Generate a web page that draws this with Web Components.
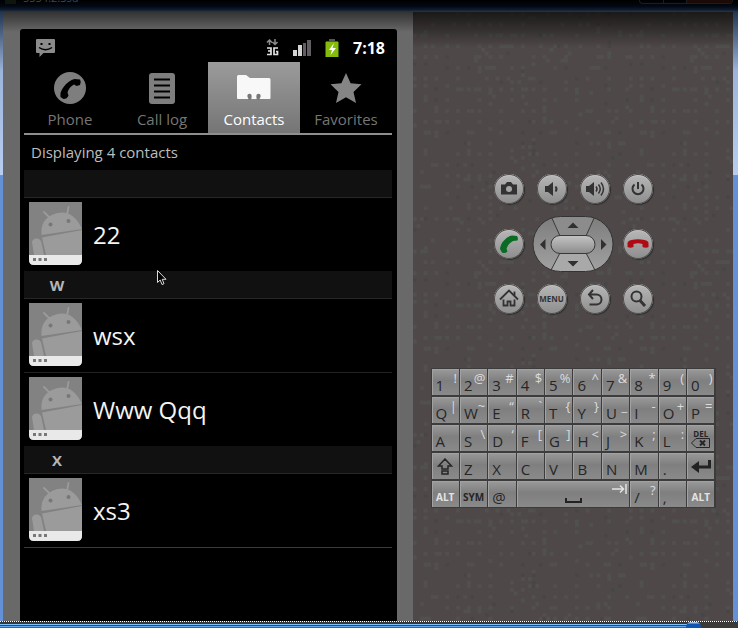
<!DOCTYPE html>
<html lang="en">
<head>
<meta charset="utf-8">
<title>Emulator 5554</title>
<style>
  html, body { height: 100%; }
  body {
    margin: 0;
    background: #000;
    font-family: "Open Sans", "Noto Sans", sans-serif;
  }
</style>
</head>
<body>
<emulator-window caption="5554:2.3sd">
  <phone-screen slot="screen" time="7:18">
    <phone-tab slot="tabs" icon="phone">Phone</phone-tab>
    <phone-tab slot="tabs" icon="log">Call log</phone-tab>
    <phone-tab slot="tabs" icon="folder" active>Contacts</phone-tab>
    <phone-tab slot="tabs" icon="star">Favorites</phone-tab>
    <list-heading>Displaying 4 contacts</list-heading>
    <list-section></list-section>
    <contact-row>22</contact-row>
    <list-section>W</list-section>
    <contact-row>wsx</contact-row>
    <contact-row divided>Www Qqq</contact-row>
    <list-section>X</list-section>
    <contact-row>xs3</contact-row>
    <list-end></list-end>
  </phone-screen>
  <hardware-keys slot="controls"></hardware-keys>
  <qwerty-board slot="controls"></qwerty-board>
</emulator-window>

<script>
const ICONS = {
  phone: `<svg width="34" height="34" viewBox="0 0 34 34"><circle cx="17" cy="17" r="16" fill="#7e7e7e"/>
    <path d="M21.500 8 27 8.500Q28.500 11 27 14L23.500 15 21 13.500Q16 16 14.500 21.500L15.500 24.500Q14 28 10.500 28L7.500 26Q6.500 21 11 15.500Q15.500 9.500 21.500 8Z" fill="#000"/></svg>`,
  log: `<svg width="34" height="34" viewBox="0 0 34 34"><rect x="4" y="2" width="26" height="31" rx="3" fill="#7e7e7e"/>
    <path d="M9 8.500h16M9 14.500h16M9 20.500h16M9 26.500h16" stroke="#000" stroke-width="2"/></svg>`,
  folder: `<svg width="34" height="34" viewBox="0 0 34 34"><path d="M0 5.500Q0 4 1.500 4H9l4 3h19q1.500 0 1.500 1.500V27q0 1-1 1H22.500v-2.500h-3V28h-5v-2.500h-3V28H1q-1 0-1-1Z" fill="#f8f8f8"/>
    <g fill="#777"><circle cx="12.500" cy="25" r="2.200"/><circle cx="21.500" cy="25" r="2.200"/><path d="M11.500 25h2v4h-2zM20.500 25h2v4h-2z"/></g></svg>`,
  star: `<svg width="34" height="34" viewBox="0 0 34 34"><path d="M17 2 21.600 12.300 32.500 13.300 24.500 20.900 27 32 17 26.300 7 32 9.500 20.900 1.500 13.300 12.400 12.300Z" fill="#858585"/></svg>`,
  camera: `<path d="M7 10.500h4l2-2.500h4l2 2.500h4V20.500H7Z"/><circle cx="15" cy="15" r="3" fill="#a5a5a5"/>`,
  quiet: `<path d="M8 12h3l5-4v14l-5-4H8Z"/><path d="M18.500 12.500q2 2.500 0 5" fill="none" stroke="#333" stroke-width="2"/>`,
  loud: `<path d="M6 12h3l5-4v14l-5-4H6Z"/><path d="M16 12.500q2 2.500 0 5M18.500 10.500q3.500 4.500 0 9M21 8.500q5 6.500 0 13" fill="none" stroke="#333" stroke-width="1.500"/>`,
  power: `<path d="M11.500 10.500a5.500 5.500 0 1 0 7 0M15 8v7" fill="none" stroke="#333" stroke-width="2"/>`,
  call: `<path d="M18 6.500 23 7Q24.500 9 23.500 11.500L19 12Q14 14.500 12.500 19.500L13.500 22.500Q11 25 8 23.500L6 20Q6.500 15 10 11.500Q13.500 7 18 6.500Z" fill="#0a6b25"/>`,
  hangup: `<path d="M4.500 14Q5 11.500 8.500 11Q15 9.500 21.500 11Q25 11.500 25.500 14V18Q23 19.500 19.500 18V15Q15 13.500 10.500 15V18Q7 19.500 4.500 18Z" fill="#b00b12"/>`,
  home: `<path d="M6 15.500 15 6.500 24 15.500M20.500 11.500V7.500M9.500 15.500V21.500H13.500V17.500H16.500V21.500H20.500V15.500" fill="none" stroke="#333" stroke-width="1.800"/>`,
  back: `<path d="M13 6 9 10.500 13 15M9.500 10.500H16.500A5 5 0 0 1 16.500 20.500H9.500" fill="none" stroke="#333" stroke-width="2"/>`,
  search: `<circle cx="13.500" cy="12.500" r="5" fill="none" stroke="#333" stroke-width="2"/><path d="M17 16.500 22 22" stroke="#333" stroke-width="3"/>`,
};

class EmulatorWindow extends HTMLElement {
  connectedCallback() {
    this.attachShadow({ mode: "open" });
    this.shadowRoot.innerHTML = `
      <style>
        :host {
          display: flex;
          flex-direction: column;
          min-height: 100vh;
          box-sizing: border-box;
          position: relative;
          overflow: hidden;
        }
        header {
          display: flex;
          align-items: flex-start;
          gap: 7px;
          height: 12px;
          padding: 0 5px;
          box-sizing: border-box;
          overflow: hidden;
          background: linear-gradient(#000, #020812 50%, #0c1b2d 80%, #2b3647);
        }
        .app { width: 11px; height: 4px; background: #0d150c; }
        header span {
          margin-top: -10px;
          font: 11px/16px "Open Sans", sans-serif;
          color: #444448;
        }
        .caption-buttons {
          display: flex;
          width: 92px;
          height: 3px;
          margin-left: auto;
          border: 1px solid #1c1d22;
          border-top: 0;
          border-radius: 0 0 5px 5px;
          overflow: hidden;
        }
        .caption-buttons i { flex: 1; border-right: 1px solid #1c1d22; }
        .caption-buttons i:last-child { flex: 2; border: 0; background: #1c0a06; }
        .frame {
          flex: 1;
          display: grid;
          grid-template-columns: 410fr 320fr;
          border-left: 3px solid;
          border-right: 5px solid;
          border-image: linear-gradient(#20334e, #9cb4dc 60px, #b8cdf0 163px, #6490d6 164px, #6490d6) 1;
        }
        .bezel {
          min-width: 0;
          box-sizing: border-box;
          padding: 17px 16px 0 17px;
          display: flex;
          background: linear-gradient(#333, #696969 20px, #696969);
        }
        .panel {
          min-width: 0;
          position: relative;
          display: flex;
          flex-direction: column;
          align-items: center;
          gap: 54px;
          padding-top: 162px;
          background: #4f4848;
        }
        .grain {
          position: absolute;
          inset: 0;
          width: 100%;
          height: 100%;
        }
        .shade {
          position: absolute;
          inset: 0 0 auto;
          height: 36px;
          background: linear-gradient(#000a, #0000);
        }
        ::slotted([slot="screen"]) { flex: 1; }
        ::slotted([slot="controls"]) { position: relative; }
        .seek {
          position: absolute;
          inset: auto 0 0;
          height: 7px;
          background: #3b3838;
        }
        .seek i {
          display: block;
          height: 1px;
          background: repeating-linear-gradient(90deg, #fff 0 1px, #333 1px 2px);
        }
        .seek b {
          display: block;
          width: 94%;
          height: 5px;
          margin-top: 1px;
          background: linear-gradient(#1d3c66 0 1px, #7cc4ff 1px 2px, #0b4fae 2px 3px, #6aa5ee 3px 4px, #1f66d0 4px);
        }
        .seek u {
          position: absolute;
          left: 93%;
          bottom: 0;
          width: 15px;
          height: 6px;
          border-radius: 5px 5px 0 0;
          background: linear-gradient(#a9c6e6 0 1px, #4f8fd8 1px 2px, #0f55b4 2px);
        }
        .pointer {
          position: absolute;
          left: 157px;
          top: 270px;
        }
      </style>
      <header><i class="app"></i><span></span><div class="caption-buttons"><i></i><i></i><i></i></div></header>
      <div class="frame">
        <div class="bezel"><slot name="screen"></slot></div>
        <div class="panel">
          <svg class="grain" aria-hidden="true">
            <defs><pattern id="grain" width="216" height="216" patternUnits="userSpaceOnUse"></pattern></defs>
            <rect width="100%" height="100%" fill="url(#grain)"/>
          </svg>
          <div class="shade"></div>
          <slot name="controls"></slot>
        </div>
      </div>
      <div class="seek"><i></i><b></b><u></u></div>
      <svg class="pointer" width="10" height="16" viewBox="0 0 10 16" aria-hidden="true">
        <path d="M0.500 0.500V12.500L3.200 10 5 14.500 7 13.700 5.200 9.300H9Z" fill="#000" stroke="#ddd"/>
      </svg>
    `;
    this.shadowRoot.querySelector("header span").textContent = this.getAttribute("caption");
    this.shadowRoot.querySelector("pattern").innerHTML = this.grain();
  }

  // fixed seed, so the speckles are the same on every load
  grain() {
    let seed = 7;
    const next = () => (seed = (seed * 16807) % 2147483647) / 2147483647;
    let out = "";
    for (let y = 0; y < 60; y++) {
      for (let x = 0; x < 60; x++) {
        const onGrid = (x % 3 === 0) + (y % 3 === 0);
        if (next() < [0.02, 0.08, 0.5][onGrid]) {
          const fill = next() < 0.85 ? "#50514e" : "#474545";
          out += `<rect x="${x * 3.6}" y="${y * 3.6}" width="3.6" height="3.6" fill="${fill}"/>`;
        }
      }
    }
    return out;
  }
}

class PhoneScreen extends HTMLElement {
  connectedCallback() {
    this.attachShadow({ mode: "open" });
    this.shadowRoot.innerHTML = `
      <style>
        :host {
          display: block;
          box-sizing: border-box;
          min-width: 0;
          padding: 0 5px 0 4px;
          border-radius: 3px 3px 0 0;
          background: #000;
        }
        .status {
          display: flex;
          align-items: center;
          height: 33px;
          padding: 4px 7px 0 12px;
          box-sizing: border-box;
        }
        .status .right {
          margin-left: auto;
          display: flex;
          align-items: center;
          gap: 14px;
        }
        time {
          color: #fff;
          font-size: 16px;
          font-weight: 700;
          line-height: 20px;
        }
        svg { display: block; }
        nav {
          display: grid;
          grid-template-columns: repeat(4, 1fr);
          border-bottom: 2px solid #8e8e8e;
        }
      </style>
      <div class="status">
        <svg width="19" height="18" viewBox="0 0 19 18">
          <path d="M1 0h17q1 0 1 1v12q0 1-1 1H7.500L3.500 18V14H1q-1 0-1-1V1Q0 0 1 0Z" fill="#8b8b8b"/>
          <path d="M4.500 4h2v2h-2zM12.500 4h2v2h-2z" fill="#000"/>
          <path d="M3 8.500Q9.500 13 16 8.500" fill="none" stroke="#000" stroke-width="1.500"/>
        </svg>
        <div class="right">
          <svg width="13" height="17" viewBox="0 0 13 17" fill="none">
            <path d="M3.500 6V2M1 3.500 3.500 1 6 3.500M9 0V5M6.500 3 9 5.500 11.500 3" stroke="#8b8b8b" stroke-width="1.500"/>
            <path d="M1 9H5V15.500H1M2 12H5M12 9H8V15.500H11.500V12.500H10" stroke="#e2e2e2" stroke-width="1.700"/>
          </svg>
          <svg width="18" height="16" viewBox="0 0 18 16">
            <path d="M0 10h4v6H0zM5 5h4v11H5z" fill="#d4d4d4"/>
            <path d="M10 3h3v13h-3zM14 0h4v16h-4z" fill="#625d62"/>
          </svg>
          <svg width="14" height="18" viewBox="0 0 14 18">
            <path d="M4 0h6v2h3v3H1V2h3Z" fill="#555"/>
            <path d="M0.500 3h13v15h-13z" fill="#85bc0b"/>
            <path d="M9 4 4 11h3l-1.500 5L11 9H7.500Z" fill="#fff"/>
          </svg>
          <time></time>
        </div>
      </div>
      <nav><slot name="tabs"></slot></nav>
      <slot></slot>
    `;
    this.shadowRoot.querySelector("time").textContent = this.getAttribute("time");
  }
}

class PhoneTab extends HTMLElement {
  connectedCallback() {
    this.attachShadow({ mode: "open" });
    this.shadowRoot.innerHTML = `
      <style>
        :host { display: block; min-width: 0; }
        button {
          display: flex;
          flex-direction: column;
          align-items: center;
          gap: 4px;
          width: 100%;
          height: 71px;
          padding: 9px 0 0;
          border: 0;
          background: none;
          color: #757575;
          font: 15px/20px "Open Sans", "Noto Sans", sans-serif;
          white-space: nowrap;
        }
        :host([active]) button {
          background: linear-gradient(#9b9b9b, #757575);
          color: #fff;
        }
        svg { display: block; flex: none; }
      </style>
      <button type="button">${ICONS[this.getAttribute("icon")]}<slot></slot></button>
    `;
  }
}

class ListHeading extends HTMLElement {
  connectedCallback() {
    this.attachShadow({ mode: "open" });
    this.shadowRoot.innerHTML = `
      <style>
        :host {
          display: block;
          height: 35px;
          padding-left: 7px;
          font-size: 15px;
          line-height: 35px;
          color: #bdbdbd;
        }
      </style>
      <slot></slot>
    `;
  }
}

class ListSection extends HTMLElement {
  connectedCallback() {
    this.attachShadow({ mode: "open" });
    this.shadowRoot.innerHTML = `
      <style>
        :host {
          display: block;
          box-sizing: border-box;
          height: 28px;
          border-bottom: 1px solid #272727;
          background: #111;
          color: #b5b5b5;
          font-size: 15px;
          font-weight: 700;
          line-height: 28px;
        }
        /* letters are centred in their own narrow column */
        div { width: 66px; text-align: center; }
      </style>
      <div><slot></slot></div>
    `;
  }
}

class ContactRow extends HTMLElement {
  connectedCallback() {
    this.attachShadow({ mode: "open" });
    this.shadowRoot.innerHTML = `
      <style>
        :host {
          display: flex;
          align-items: center;
          gap: 11px;
          height: 73px;
          padding-left: 5px;
          color: #f4f4f4;
          font-size: 24px;
          line-height: 32px;
        }
        :host([divided]) { border-top: 1px solid #222; }
        svg { display: block; margin-bottom: 2px; }
      </style>
      <svg width="53" height="63" viewBox="0 0 53 63">
        <path d="M0 0H53V58Q53 63 48 63H5Q0 63 0 58Z" fill="#828282"/>
        <g fill="#9b9b9b">
          <path d="M12.500 33Q11 18 24 12.500Q42 5 52 25L53 27Z"/>
          <path d="M13 35.500 53 28V53H17Z"/>
          <path d="M3 40Q4 36 8 36.500Q12 37 12.500 41L15 53H5Z"/>
        </g>
        <path d="M15 10 20 15M39.500 5 38 13" stroke="#9b9b9b" stroke-width="1.800" stroke-linecap="round"/>
        <g fill="#777"><circle cx="21.500" cy="22.500" r="2"/><circle cx="39.500" cy="19" r="2"/></g>
        <path d="M0 53H53V58Q53 63 48 63H5Q0 63 0 58Z" fill="#e9e9e9"/>
        <path d="M4 56h3v3H4zM9.500 56h3v3h-3zM15 56h3v3h-3z" fill="#777"/>
      </svg>
      <slot></slot>
    `;
  }
}

class ListEnd extends HTMLElement {
  connectedCallback() {
    this.attachShadow({ mode: "open" });
    this.shadowRoot.innerHTML = `
      <style>:host { display: block; border-top: 1px solid #3a3a3a; }</style>
    `;
  }
}

class HardwareKeys extends HTMLElement {
  connectedCallback() {
    const key = (name, label) => `<button type="button" class="key" aria-label="${label}">
      <svg width="30" height="30" viewBox="0 0 30 30" fill="#333">${ICONS[name]}</svg></button>`;
    this.attachShadow({ mode: "open" });
    this.shadowRoot.innerHTML = `
      <style>
        :host {
          display: grid;
          grid-template-columns: repeat(4, 43px);
          gap: 12px 0;
          place-items: center;
        }
        button { padding: 0; border: 0; background: none; }
        svg { display: block; }
        .key {
          display: grid;
          place-items: center;
          width: 30px;
          height: 30px;
          border-radius: 50%;
          background: linear-gradient(#b8b8b8, #8d8d8d);
          box-shadow: inset 0 0 0 1px #4d4a4a, inset 0 2px 1px #c4c4c4, 1px 1px 1px #2e2e2e;
          color: #333;
          font: 700 8px/30px "Open Sans", sans-serif;
        }
        .pad { grid-column: span 2; }
      </style>
      ${key("camera", "Camera")}${key("quiet", "Volume down")}${key("loud", "Volume up")}${key("power", "Power")}
      ${key("call", "Call")}
      <button type="button" class="pad" aria-label="Direction pad">
        <svg width="82" height="56" viewBox="0 0 82 56">
          <defs>
            <linearGradient id="pad" x2="0" y2="1"><stop stop-color="#7c7c7c"/><stop offset="1" stop-color="#a2a2a2"/></linearGradient>
            <linearGradient id="ok" x2="0" y2="1"><stop stop-color="#c4c4c4"/><stop offset="1" stop-color="#8c8c8c"/></linearGradient>
            <clipPath id="round"><rect x="1" y="0.500" width="80" height="55" rx="27.500"/></clipPath>
          </defs>
          <g clip-path="url(#round)">
            <rect width="82" height="56" fill="url(#pad)"/>
            <path d="M19 0H63L54 20H28Z" fill="#8c8c8c"/>
            <path d="M28 37H54L64 56H18Z" fill="#a9a9a9"/>
            <path d="M19 0 28 20M63 0 54 20M28 37 18 56M54 37 64 56" stroke="#3a3a3a" fill="none"/>
          </g>
          <rect x="1" y="0.500" width="80" height="55" rx="27.500" fill="none" stroke="#333"/>
          <rect x="19" y="19.500" width="44" height="18" rx="9" fill="url(#ok)" stroke="#383838"/>
          <path d="M35.500 12h11L41 6.500ZM35.500 45h11L41 50.500ZM13.500 23v11L8 28.500ZM69 23v11l5.500-5.500Z" fill="#303030"/>
        </svg>
      </button>
      ${key("hangup", "End call")}
      ${key("home", "Home")}<button type="button" class="key">MENU</button>${key("back", "Back")}${key("search", "Search")}
    `;
  }
}

class QwertyBoard extends HTMLElement {
  connectedCallback() {
    const rows = [
      ["1 !", "2 @", "3 #", "4 $", "5 %", "6 ^", "7 &amp;", "8 *", "9 (", "0 )"],
      ["Q |", "W ~", "E “", "R `", "T {", "Y }", "U _", "I -", "O +", "P ="],
      ["A", "S \\", "D ‘", "F [", "G ]", "H &lt;", "J &gt;", "K ;", "L :"],
    ];
    const key = (pair) => {
      const [main, alt] = pair.split(" ");
      return `<button type="button"><span>${main}</span>${alt ? `<sup>${alt}</sup>` : ""}</button>`;
    };
    this.attachShadow({ mode: "open" });
    this.shadowRoot.innerHTML = `
      <style>
        :host {
          display: grid;
          grid-template-columns: repeat(10, 1fr);
          grid-auto-rows: 26px;
          gap: 2px 1px;
          box-sizing: border-box;
          width: 285px;
          padding: 1px;
          background: #3c3c3c;
        }
        button {
          display: flex;
          justify-content: space-between;
          min-width: 0;
          padding: 0 2px 0 4px;
          border: 0;
          background: linear-gradient(#9a9a9a, #7f7f7f 45%, #8a8a8a);
          box-shadow: inset 1px 1px 0 #a2a2a2;
          color: #262626;
          font: 15px/20px "Open Sans", "Noto Sans", sans-serif;
        }
        span { align-self: flex-end; line-height: 20px; }
        sup {
          align-self: flex-start;
          margin-left: -4px;
          color: #dcdcdc;
          font-size: 13px;
          line-height: 18px;
        }
        .mod {
          justify-content: center;
          align-items: center;
          padding: 6px 0 0;
          font-size: 10px;
          font-weight: 700;
        }
        .light { color: #e4e4e4; }
        .glyph { justify-content: center; align-items: center; padding: 0; }
        .del {
          flex-direction: column;
          justify-content: center;
          align-items: center;
          padding: 0;
          font-size: 8px;
          font-weight: 700;
          line-height: 9px;
        }
        .space { grid-column: span 4; }
        .space svg:first-child { align-self: flex-end; margin: 0 0 4px 44px; }
        svg { display: block; flex: none; }
      </style>
      ${rows.flat().map(key).join("")}
      <button type="button" class="del">DEL
        <svg width="19" height="10" viewBox="0 0 19 10" fill="none" stroke="#262626"><path d="M5 0.500H18.500V9.500H5L0.500 5Z"/><path d="M9 2.500 14 7.500M14 2.500 9 7.500" stroke-width="2"/></svg>
      </button>
      <button type="button" class="glyph" aria-label="Shift">
        <svg width="16" height="17" viewBox="0 0 16 17" fill="none" stroke="#262626" stroke-width="1.500"><path d="M8 1 14.500 8H11V11H5V8H1.500ZM5 13H11V16H5Z"/></svg>
      </button>
      ${["Z", "X", "C", "V", "B", "N", "M", "."].map(key).join("")}
      <button type="button" class="glyph" aria-label="Enter">
        <svg width="20" height="15" viewBox="0 0 20 15"><path d="M18.500 1V8H6" fill="none" stroke="#222" stroke-width="3"/><path d="M0 8 8 2V14Z" fill="#222"/></svg>
      </button>
      <button type="button" class="mod light">ALT</button>
      <button type="button" class="mod">SYM</button>
      ${key("@")}
      <button type="button" class="space" aria-label="Space">
        <svg width="17" height="5" viewBox="0 0 17 5"><path d="M1 0V4H16V0" fill="none" stroke="#222" stroke-width="2"/></svg>
        <svg width="15" height="15" viewBox="0 0 15 15" fill="none" stroke="#e4e4e4" stroke-width="1.500"><path d="M0 8H12M8 4.500 11.500 8 8 11.500M14 3V13"/></svg>
      </button>
      ${key("/ ?")}${key(",")}
      <button type="button" class="mod light">ALT</button>
    `;
  }
}

customElements.define("emulator-window", EmulatorWindow);
customElements.define("phone-screen", PhoneScreen);
customElements.define("phone-tab", PhoneTab);
customElements.define("list-heading", ListHeading);
customElements.define("list-section", ListSection);
customElements.define("contact-row", ContactRow);
customElements.define("list-end", ListEnd);
customElements.define("hardware-keys", HardwareKeys);
customElements.define("qwerty-board", QwertyBoard);
</script>
</body>
</html>
